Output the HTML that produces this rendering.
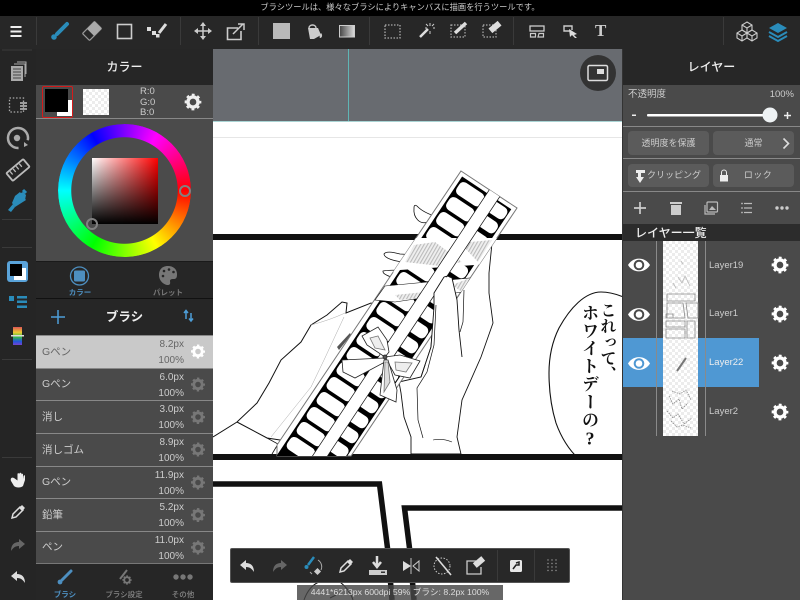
<!DOCTYPE html>
<html><head><meta charset="utf-8">
<style>
*{box-sizing:border-box;margin:0;padding:0}
html,body{width:800px;height:600px;overflow:hidden;background:#272727;font-family:"Liberation Sans","Noto Sans CJK JP",sans-serif}
.a{position:absolute}
.t{position:absolute;white-space:nowrap;line-height:1}
.chk{background-color:#fff;background-image:conic-gradient(#ececec 25%,#fff 0 50%,#ececec 0 75%,#fff 0);background-size:6px 6px}
.btn{position:absolute;background:#5b5b5b;border-radius:4px;color:#ccc;font-size:9px;line-height:24px;text-align:center}
.item{position:absolute;left:36px;width:177px;height:32.67px;background:#4a4a4a;border-top:1px solid #888;color:#ccc;font-size:10px}
.item .n{position:absolute;left:6px;top:10.500px;font-size:10.500px;line-height:1.1}
.item .s{position:absolute;right:29px;top:4px;line-height:1}
.item .p{position:absolute;right:29px;top:20px;line-height:1}
.sel{background:#c9c9c9;color:#666}
</style></head>
<body>
<!-- canvas -->
<div class="a" style="left:213px;top:49px;width:409px;height:72px;background:#686b70"></div>
<div class="a" style="left:213px;top:121px;width:409px;height:479px;background:#fff"></div>

<svg class="a" style="left:0;top:0" width="800" height="600" viewBox="0 0 800 600">
<defs>
<clipPath id="box"><path d="M461 171L517 208L351 456L277 456L277 445Z"/></clipPath>
<clipPath id="cv"><rect x="213" y="121" width="409" height="479"/></clipPath>
<pattern id="hatch" width="3" height="3" patternUnits="userSpaceOnUse" patternTransform="rotate(30)"><rect width="3" height="3" fill="#efefef"/><rect width="1.100" height="3" fill="#bbb"/></pattern>
</defs>
<g clip-path="url(#cv)">
<rect x="213" y="137" width="409" height="1" fill="#e6e6e6"/>
<rect x="213" y="121" width="409" height="1" fill="#a9d4d4"/>
<rect x="213" y="234" width="409" height="6" fill="#111"/>
<rect x="213" y="454" width="409" height="6" fill="#111"/>
<!-- lower frames -->
<path d="M213 484H379.500L388 552L392 600" fill="none" stroke="#111" stroke-width="5.500"/>
<path d="M622 508H404.500L410 552L414 600" fill="none" stroke="#111" stroke-width="5.500"/>
<path d="M304 600Q309 586 319 582M340 582Q350 590 353 600M330 598l6-3" fill="none" stroke="#111" stroke-width="1"/>

<!-- fingertips behind box -->
<g fill="#fff" stroke="#111" stroke-width=".8">
<path d="M428 222C420 225 413 218 414 208C414 204 416 205 418 207C422 211 428 214 437 217Z"/>
<path d="M407 262C395 262 384 258 384 254C386 251 392 252 400 254L416 255Z"/>
<path d="M398 279C390 277 382 274 383 271C388 270 396 270 408 270Z"/>
<!-- left hand -->
<path d="M213 437L237 422L257 403L269 383L281 360L301 342L311 325L327 315L342 302L347 303L346 313L371 303L390 310L330 420L280 440L267 438L237 422" stroke-width="1"/>
<path d="M267 438L278 444L272 454" fill="none"/>
<path d="M311 325Q330 320 345 313M344 317L324 360L311 387L271 437" fill="none" stroke="#aaa" stroke-width=".5"/>
<path d="M337 347L350 333L351 335L339 350Z" fill="#555" stroke="none"/>
<!-- right hand body (behind box) -->
<path d="M411 454L411 437L404 417L401 393L399 382L421 377L431 347L434 307L434 293L444 277L452 278L457 298L492 243L489 273L489 293L493 323L481 357L462 400L457 437L461 454Z" stroke-width=".9"/>
</g>

<!-- box -->
<path d="M461 171L517 208L351 456L277 456L277 445Z" fill="#fff" stroke="#777" stroke-width="1"/>
<g clip-path="url(#box)">
<g transform="translate(461 171) rotate(33.6)">
<rect x="4" y="4" width="59" height="345" fill="#000"/>
<g fill="#fff">
<rect x="6" y="7" width="29" height="14.500" rx="5"/><rect x="6" y="25" width="29" height="14.500" rx="5"/><rect x="6" y="43" width="29" height="14.500" rx="5"/><rect x="6" y="61" width="29" height="14.500" rx="5"/><rect x="6" y="79" width="29" height="14.500" rx="5"/><rect x="6" y="97" width="29" height="14.500" rx="5"/><rect x="6" y="115" width="29" height="14.500" rx="5"/><rect x="6" y="133" width="29" height="14.500" rx="5"/><rect x="6" y="151" width="29" height="14.500" rx="5"/><rect x="6" y="169" width="29" height="14.500" rx="5"/><rect x="6" y="187" width="29" height="14.500" rx="5"/><rect x="6" y="205" width="29" height="14.500" rx="5"/><rect x="6" y="223" width="29" height="14.500" rx="5"/><rect x="6" y="241" width="29" height="14.500" rx="5"/><rect x="6" y="259" width="29" height="14.500" rx="5"/><rect x="6" y="277" width="29" height="14.500" rx="5"/><rect x="6" y="295" width="29" height="14.500" rx="5"/><rect x="6" y="313" width="29" height="14.500" rx="5"/>
<rect x="42" y="6" width="20" height="13" rx="5"/><rect x="42" y="23" width="20" height="13" rx="5"/><rect x="42" y="41" width="20" height="13" rx="5"/><rect x="42" y="59" width="20" height="13" rx="5"/><rect x="42" y="77" width="20" height="13" rx="5"/><rect x="42" y="95" width="20" height="13" rx="5"/><rect x="42" y="113" width="20" height="13" rx="5"/><rect x="42" y="131" width="20" height="13" rx="5"/><rect x="42" y="149" width="20" height="13" rx="5"/><rect x="42" y="167" width="20" height="13" rx="5"/><rect x="42" y="185" width="20" height="13" rx="5"/><rect x="42" y="203" width="20" height="13" rx="5"/><rect x="42" y="221" width="20" height="13" rx="5"/><rect x="42" y="239" width="20" height="13" rx="5"/><rect x="42" y="257" width="20" height="13" rx="5"/><rect x="42" y="275" width="20" height="13" rx="5"/><rect x="42" y="293" width="20" height="13" rx="5"/><rect x="42" y="311" width="20" height="13" rx="5"/>
</g>
</g>
<!-- wrapped band -->
<path d="M400 238H500V262L475 265L400 270L385 275Z" fill="#fff"/>
<path d="M414 245L435 242L462 262L440 266L405 262ZM470 242L492 240L478 262L462 245Z" fill="url(#hatch)"/>
<path d="M385 286L470 278L462 292L395 302L375 300Z" fill="#fff" stroke="#111" stroke-width=".6"/>
<path d="M395 295L425 292L420 298L400 300Z" fill="url(#hatch)"/>
<path d="M452 285L470 278L462 292Z" fill="url(#hatch)"/>
<g transform="translate(461 171) rotate(33.6)">
<rect x="34" y="-2" width="12.500" height="350" fill="#fff" stroke="#111" stroke-width=".7"/>
</g>
</g>

<!-- thumb in front of box -->
<path d="M444 277L434 293L434 307L431 347L425 365L440 365L459 330L457 300L452 278Z" fill="#fff"/>
<g stroke="#111" fill="none" stroke-width=".9">
<path d="M444 277L434 293L434 307L431 347L421 377M444 277Q449 275 452 278L457 300L459 330L462 357"/>
<path d="M464 290L463 322L460 332M436 305L434 345L427 372L417 388L418 420L423 438" stroke-width=".7"/>
<path d="M433 440Q442 438 452 442" stroke-width=".6"/>
</g>
<!-- bow -->
<g fill="#fff" stroke="#222" stroke-width=".8">
<path d="M385 357L367 345L362 336L378 327L387 340L389 352Z"/>
<path d="M370 338L378 336L385 350L375 348Z" fill="#eee" stroke="#777"/>
<path d="M385 358L342 360L343 372L355 378L385 362Z"/>
<path d="M385 357L400 355L420 361L410 378L395 375Z"/>
<path d="M395 362L412 363L406 372L396 370Z" fill="#eee" stroke="#777"/>
<path d="M384 360L380 395L396 402L397 390L388 360Z"/>
<path d="M385 362L384 392L390 382L388 362Z" fill="#ddd" stroke="#777"/>
<circle cx="385" cy="357" r="2" fill="#555"/>
</g>
<!-- balloon -->
<path d="M630 300C618 294 608 292 601 292C585 292 570 308 559 328C552 342 549 358 549 373C549 395 552 410 556 423C561 437 569 450 578 458H630Z" fill="#fff" stroke="#111" stroke-width="1.100"/>
<rect x="560" y="454" width="62" height="6" fill="#111"/>
</g>
<rect x="348" y="49" width="1" height="72" fill="#5fb5b5"/>
</svg>

<div class="t" style="left:599px;top:302px;writing-mode:vertical-rl;font:700 16px/18px 'Noto Serif CJK SC',serif;color:#111">これって、</div>
<div class="t" style="left:581px;top:304px;writing-mode:vertical-rl;font:700 17px/18px 'Noto Serif CJK SC',serif;color:#111;letter-spacing:.8px">ホワイトデーの<span style="text-orientation:upright;font-family:'Liberation Serif',serif;font-size:18px">?</span></div>

<!-- chrome -->
<div class="a" style="left:0;top:0;width:800px;height:16px;background:#000"></div>
<div class="t" style="left:0;width:800px;top:3.500px;text-align:center;font-size:8.250px;color:#ccc">ブラシツールは、様々なブラシによりキャンバスに描画を行うツールです。</div>
<div class="a" style="left:0;top:16px;width:800px;height:33px;background:#272727"></div>
<div class="a" style="left:0;top:49px;width:36px;height:551px;background:#252525"></div>
<div class="a" style="left:36px;top:49px;width:177px;height:551px;background:#262626"></div>
<div class="a" style="left:622px;top:49px;width:178px;height:551px;background:#4a4a4a;border-left:1px solid #333"></div>
<div class="a" style="left:623px;top:49px;width:177px;height:36px;background:#272727"></div>
<div class="a" style="left:36px;top:85px;width:177px;height:33px;background:#4a4a4a"></div>
<div class="a" style="left:36px;top:118px;width:177px;height:1px;background:#888"></div>
<div class="a" style="left:36px;top:119px;width:177px;height:142px;background:#4b4b4b"></div>
<div class="a" style="left:36px;top:261px;width:177px;height:37px;background:#262626;border-top:1px solid #1a1a1a"></div>
<div class="a" style="left:36px;top:298px;width:177px;height:1px;background:#111"></div>

<div class="t" style="left:36px;width:177px;top:61px;text-align:center;font-size:12px;font-weight:500;color:#eee">カラー</div>
<div class="a" style="left:42px;top:86px;width:31px;height:32px;border:1.500px solid #d51a1a;border-radius:2px;background:#4a4a4a"></div>
<div class="a" style="left:57px;top:100px;width:15px;height:16px;background:#fff"></div>
<div class="a" style="left:45px;top:89px;width:23px;height:23px;background:#000;"></div>
<div class="a chk" style="left:83px;top:89px;width:26px;height:26px"></div>
<div class="t" style="left:140px;top:87px;font-size:9.500px;line-height:10.500px;color:#ccc">R:0<br>G:0<br>B:0</div>

<!-- wheel -->
<div class="a" style="left:58px;top:124px;width:133px;height:133px;border-radius:50%;background:conic-gradient(from 90deg,#f00,#ff0,#0f0,#0ff,#00f,#f0f,#f00);-webkit-mask:radial-gradient(circle,transparent 53px,#000 53.500px);mask:radial-gradient(circle,transparent 53px,#000 53.500px)"></div>
<div class="a" style="left:92px;top:158px;width:66px;height:66px;background:linear-gradient(to bottom,transparent,#000),linear-gradient(to right,#fff,#f00)"></div>
<div class="a" style="left:178.500px;top:184.500px;width:12px;height:12px;border-radius:50%;border:2px solid #808080"></div>
<div class="a" style="left:85.500px;top:217.500px;width:12px;height:12px;border-radius:50%;border:2px solid #808080"></div>

<div class="t" style="left:50px;width:60px;text-align:center;top:289px;font-size:7.500px;font-weight:700;color:#4d8fc0">カラー</div>
<div class="t" style="left:138px;width:60px;text-align:center;top:289px;font-size:7.500px;font-weight:700;color:#777">パレット</div>

<div class="t" style="left:36px;width:177px;top:310.500px;text-align:center;font-size:12.500px;font-weight:700;color:#eee">ブラシ</div>

<div class="item sel" style="top:335px"><span class="n">Gペン</span><span class="s">8.2px</span><span class="p">100%</span></div>
<div class="item" style="top:367.700px"><span class="n">Gペン</span><span class="s">6.0px</span><span class="p">100%</span></div>
<div class="item" style="top:400.300px"><span class="n">消し</span><span class="s">3.0px</span><span class="p">100%</span></div>
<div class="item" style="top:433px"><span class="n">消しゴム</span><span class="s">8.9px</span><span class="p">100%</span></div>
<div class="item" style="top:465.700px"><span class="n">Gペン</span><span class="s">11.9px</span><span class="p">100%</span></div>
<div class="item" style="top:498.300px"><span class="n">鉛筆</span><span class="s">5.2px</span><span class="p">100%</span></div>
<div class="item" style="top:530.700px"><span class="n">ペン</span><span class="s">11.0px</span><span class="p">100%</span></div>
<div class="a" style="left:36px;top:563px;width:177px;height:1px;background:#777"></div>

<div class="t" style="left:35px;width:60px;text-align:center;top:591px;font-size:7.500px;font-weight:700;color:#4d8fc0">ブラシ</div>
<div class="t" style="left:94px;width:60px;text-align:center;top:591px;font-size:7.500px;font-weight:500;color:#888">ブラシ設定</div>
<div class="t" style="left:153px;width:60px;text-align:center;top:591px;font-size:7.500px;font-weight:500;color:#888">その他</div>

<!-- right panel -->
<div class="t" style="left:623px;width:177px;top:61px;text-align:center;font-size:12px;font-weight:500;color:#eee">レイヤー</div>
<div class="t" style="left:628px;top:90px;font-size:9.500px;color:#ccc">不透明度</div>
<div class="t" style="right:6px;top:90px;font-size:9.500px;color:#ccc">100%</div>
<div class="a" style="left:623px;top:126px;width:177px;height:1px;background:#888"></div>
<div class="a" style="left:623px;top:158px;width:177px;height:1px;background:#888"></div>
<div class="a" style="left:623px;top:191px;width:177px;height:1px;background:#888"></div>
<div class="btn" style="left:628px;top:131px;width:81px;height:24px">透明度を保護</div>
<div class="btn" style="left:713px;top:131px;width:81px;height:24px">通常</div>
<div class="btn" style="left:628px;top:164px;width:81px;height:23px;line-height:23px;padding-left:11px">クリッピング</div>
<div class="btn" style="left:713px;top:164px;width:81px;height:23px;line-height:23px;padding-left:9px;letter-spacing:.4px">ロック</div>
<div class="a" style="left:623px;top:224px;width:177px;height:17px;background:#2c2c2c"></div>
<div class="t" style="left:635px;top:226.500px;font-size:12px;font-weight:500;color:#eee">レイヤー一覧</div>

<div class="a" style="left:623px;top:338px;width:136px;height:49px;background:#4f98d3"></div>
<div class="a" style="left:656px;top:241px;width:1px;height:195px;background:#8a8a8a"></div>
<div class="a" style="left:705px;top:241px;width:1px;height:195px;background:#8a8a8a"></div>
<div class="a chk" style="left:663px;top:241px;width:35px;height:195px"></div>
<svg class="a" style="left:663px;top:241px" width="36" height="195" viewBox="0 0 36 195" fill="none" stroke="#8a8a8a" stroke-width=".8">
<path d="M15 36l4 6 3-7 5 10M10 42l3 5M18 20l2 3" stroke="#bbb"/>
<path d="M4 53H32V60H4ZM4 62H20L22 77H4ZM23 62H35V77H25ZM3 73H10V77H3ZM3 80H22V86H3ZM3 88H22V97H3ZM24 80H32V97H24Z"/>
<path d="M14 130L23 117" stroke="#777" stroke-width="2"/>
<path d="M6 155l4 8 6-5 3 10 6-6M4 170l6 7 5-4 6 10 8-6M9 150l8 3 6-4 5 10M8 180l6 6 6-2 8 3" stroke="#888" stroke-dasharray="1.500 1"/>
</svg>
<div class="t" style="left:709px;top:260.500px;font-size:9.500px;color:#ccc">Layer19</div>
<div class="t" style="left:709px;top:309px;font-size:9.500px;color:#ccc">Layer1</div>
<div class="t" style="left:709px;top:358px;font-size:9.500px;font-weight:500;color:#eee">Layer22</div>
<div class="t" style="left:709px;top:407px;font-size:9.500px;color:#ccc">Layer2</div>

<!-- floating toolbar -->
<div class="a" style="left:297px;top:585px;width:206px;height:15px;background:rgba(70,70,70,.82)"></div>
<div class="t" style="left:297px;width:206px;top:588px;text-align:center;font-size:8.700px;color:#ddd">4441*6213px 600dpi 59% ブラシ: 8.2px 100%</div>
<div class="a" style="left:230px;top:548px;width:340px;height:35px;background:#282828;border:1px solid #555;border-radius:2px"></div>
<div class="a" style="left:580px;top:55px;width:36px;height:36px;border-radius:50%;background:#333"></div>
<div class="t" style="left:595px;top:22px;font:700 17px/18px 'Liberation Serif',serif;color:#ccc">T</div>

<!-- icon overlay -->
<svg class="a" style="left:0;top:0" width="800" height="600" viewBox="0 0 800 600" fill="none">
<defs>
<symbol id="gear" viewBox="-10 -10 20 20" overflow="visible"><circle r="5.600" stroke="currentColor" stroke-width="3.800"/><circle r="8" stroke="currentColor" stroke-width="2.600" stroke-dasharray="3.140 3.140" stroke-dashoffset="1.570"/></symbol>
<symbol id="eye" viewBox="-11 -7 22 14" overflow="visible"><path d="M-11 0C-6-8.500 6-8.500 11 0C6 8.500-6 8.500-11 0Z" fill="#fff"/><circle r="4.300" fill="none" stroke="#4a4a4a" stroke-width="2"/></symbol>
<symbol id="undo" viewBox="-8 -7 16 14" overflow="visible"><path d="M-7-1L-1-6V-3C4-3 7 0 7 6C5 3 3 1-1 1V4Z" fill="currentColor"/></symbol>
<symbol id="drop" viewBox="-8 -8 16 16" overflow="visible"><path d="M-6 6L-5 2L2-5L5-2L-2 5Z" stroke="currentColor" stroke-width="1.500"/><path d="M1-4L4-7L7-4L4-1Z" fill="currentColor"/></symbol>
</defs>

<!-- top toolbar separators -->
<g fill="#3a3a3a"><rect x="36" y="17" width="1" height="28"/><rect x="180" y="17" width="1" height="28"/><rect x="258" y="17" width="1" height="28"/><rect x="369" y="17" width="1" height="28"/><rect x="513" y="17" width="1" height="28"/><rect x="723" y="17" width="1" height="28"/></g>
<g fill="#eee"><rect x="10.500" y="26" width="11" height="2"/><rect x="10.500" y="30.500" width="11" height="2"/><rect x="10.500" y="35" width="11" height="2"/></g>
<!-- brush -->
<path d="M67 24L57 34" stroke="#2a8cba" stroke-width="4" stroke-linecap="round"/><circle cx="54" cy="37" r="2.800" fill="#2a8cba"/>
<!-- eraser -->
<g transform="translate(92 31) rotate(-45)"><rect x="-8.500" y="-5" width="17" height="10" rx="1" stroke="#999" stroke-width="1.200"/><rect x="-2" y="-5" width="10.500" height="10" fill="#aaa"/></g>
<rect x="117.500" y="24.500" width="14" height="14" stroke="#ccc" stroke-width="1.600"/>
<!-- ctrl -->
<path d="M159 33L166 24" stroke="#ddd" stroke-width="3"/><g fill="#ddd"><rect x="147" y="27" width="4" height="4"/><rect x="152" y="31" width="4" height="4"/><rect x="156" y="34" width="3.500" height="3.500"/></g>
<!-- move -->
<path d="M203 24V38M196 31H210" stroke="#ccc" stroke-width="1.500"/><path d="M203 22L200 26H206ZM203 40L200 36H206ZM194 31L198 28V34ZM212 31L208 28V34Z" fill="#ccc"/>
<!-- transform -->
<path d="M238 28H227.500V39.500H241V31" stroke="#ccc" stroke-width="1.600"/><path d="M233 34L243 24M238 24H244V30" stroke="#ccc" stroke-width="1.500"/>
<rect x="273" y="23" width="17" height="16" fill="#b9b9b9"/>
<!-- bucket -->
<path d="M308 28L318 28L321 35L314 39H310Z" fill="#ccc"/><path d="M309 28C309 24 316 24 316 28" stroke="#ccc" stroke-width="1.400"/><path d="M321 33C323 35 322 38 320 38C319 37 320 35 321 33Z" fill="#ccc"/>
<defs><linearGradient id="g2"><stop offset="0" stop-color="#444"/><stop offset="1" stop-color="#ddd"/></linearGradient></defs>
<rect x="339.500" y="25.500" width="15" height="11.500" fill="url(#g2)" stroke="#ccc"/>
<!-- selection -->
<rect x="385" y="25" width="15" height="13" stroke="#aaa" stroke-width="1.300" stroke-dasharray="1.500 1.500"/>
<!-- wand -->
<path d="M420 37L428 29" stroke="#ddd" stroke-width="2.500"/><path d="M430 23V26M430 31V34M425 28H427M433 28H435M426 24L428 26M434 24L432 26" stroke="#ccc" stroke-width="1"/>
<!-- sel pen -->
<rect x="451" y="25" width="14" height="12" stroke="#aaa" stroke-width="1.200" stroke-dasharray="1.500 1.500"/><path d="M455 33L466 23" stroke="#ddd" stroke-width="3.500"/>
<!-- sel eraser -->
<rect x="483" y="25" width="13" height="12" stroke="#aaa" stroke-width="1.200" stroke-dasharray="1.500 1.500"/><g transform="translate(495 27) rotate(-40)"><rect x="-6" y="-3" width="12" height="6" fill="#ddd"/></g>
<!-- panel -->
<rect x="530" y="26" width="14" height="5" stroke="#ccc" stroke-width="1.300"/><path d="M530.500 33.500H535.500V37H530.500ZM538 37L539 33.500H543.500V37Z" stroke="#ccc" stroke-width="1.200"/>
<!-- op -->
<path d="M570 31H564V26H572V30" stroke="#ccc" stroke-width="1.400"/><path d="M569 29L577 34L574 35L577 38L575 38L572 35L570 37Z" fill="#ddd"/>
<!-- cubes -->
<g stroke="#ccc" stroke-width="1.100"><path d="M747 22L752 25V30L747 33L742 30V25ZM742 25L747 28L752 25M747 28V33"/><path d="M742 30L747 33V38L742 41L737 38V33ZM737 33L742 36L747 33M742 36V41"/><path d="M752 30L757 33V38L752 41L747 38V33ZM747 33L752 36L757 33M752 36V41"/></g>
<!-- layers blue -->
<path d="M778 23L787 28L778 33L769 28Z" fill="#2a8cba"/><path d="M769 32L778 37L787 32M769 36L778 41L787 36" stroke="#2a8cba" stroke-width="2"/>

<!-- minimap icon -->
<rect x="588" y="65.500" width="19.500" height="15" rx="1.500" stroke="#ddd" stroke-width="1.500"/><rect x="597" y="69" width="7" height="5" fill="#ddd"/>

<!-- left sidebar -->
<g fill="#3a3a3a"><rect x="2" y="49.500" width="30" height="1"/><rect x="2" y="219" width="30" height="1"/><rect x="2" y="247" width="30" height="1"/><rect x="2" y="359" width="30" height="1"/><rect x="2" y="457" width="30" height="1"/></g>
<path d="M14 64H25V77M17 62H26V74" stroke="#aaa" stroke-width="1"/><rect x="11" y="66" width="12" height="15" fill="#aaa"/><path d="M13 69H21M13 72H21M13 75H21M13 78H21" stroke="#444" stroke-width="1"/>
<rect x="9.500" y="98" width="14" height="14" stroke="#aaa" stroke-width="1.300" stroke-dasharray="1.500 1.800"/><path d="M20 103H27M20 106H27M20 109H27" stroke="#aaa" stroke-width="1.800"/>
<path d="M26 144A10 10 0 1 1 26 132" stroke="#aaa" stroke-width="2.500" transform="rotate(50 18 138)"/><circle cx="17" cy="138" r="3.200" fill="#aaa"/><path d="M24 142L28 145L24 147Z" fill="#aaa"/>
<g transform="translate(18 170) rotate(-40)"><rect x="-11" y="-5" width="22" height="10" rx="1" stroke="#bbb" stroke-width="1.800"/><path d="M-7-4V0M-3-4V0M1-4V0M5-4V0" stroke="#bbb" stroke-width="1.300"/></g>
<g fill="#2a8cba"><path d="M15 196L20 192L26 200L15 207L12 203Z"/><path d="M23 190L26 193" stroke="#2a8cba" stroke-width="3"/><path d="M8 210L13 204L15 207L11 212Z"/><path d="M15 196L19 194L23 192L26 195L25 200Z"/></g>
<!-- color box -->
<rect x="7" y="261" width="21" height="21" rx="3" fill="#5aa3d9"/><rect x="14" y="268" width="12" height="12" fill="#fff"/><rect x="10" y="264" width="12" height="12" fill="#000"/>
<!-- list -->
<rect x="9" y="296" width="5" height="5" fill="#2a8cba"/><rect x="17" y="296" width="10" height="2.500" fill="#2a8cba"/><rect x="17" y="300.500" width="10" height="2.500" fill="#2a8cba"/><rect x="17" y="305.500" width="10" height="2.500" fill="#2a8cba"/>
<defs><linearGradient id="rb" x1="0" y1="0" x2="0" y2="1"><stop offset="0" stop-color="#d55"/><stop offset=".3" stop-color="#ec3"/><stop offset=".55" stop-color="#3b4"/><stop offset=".8" stop-color="#25d"/><stop offset="1" stop-color="#74c"/></linearGradient></defs>
<rect x="13" y="327" width="9" height="18" fill="url(#rb)"/><rect x="11" y="335" width="13" height="1.500" fill="#ddd"/>
<!-- hand -->
<path d="M11 481L14 486C16 488 21 488 23 486L25 480V476C25 475 24 475 23.500 476L23 479V474.500C23 473.500 22 473.500 21.500 474.500V479V473.500C21 472.500 19.500 472.500 19.500 473.500V479V474C19 473 17.500 473 17.500 474V480.500L14 478C12 477 10 478 11 481Z" fill="#eee"/>
<use href="#drop" x="10" y="504" width="16" height="16" color="#ddd"/>
<g transform="translate(18 545) scale(-1 1)"><use href="#undo" x="-8" y="-7" width="16" height="14" color="#666"/></g>
<use href="#undo" x="10" y="570" width="16" height="14" color="#ddd"/>

<!-- gears -->
<use href="#gear" x="184" y="93" width="18" height="18" color="#eee"/>
<use href="#gear" x="190.500" y="344" width="15" height="15" color="#fff"/>
<use href="#gear" x="190.500" y="377" width="15" height="15" color="#777"/>
<use href="#gear" x="190.500" y="409.500" width="15" height="15" color="#777"/>
<use href="#gear" x="190.500" y="442" width="15" height="15" color="#777"/>
<use href="#gear" x="190.500" y="475" width="15" height="15" color="#777"/>
<use href="#gear" x="190.500" y="507.500" width="15" height="15" color="#777"/>
<use href="#gear" x="190.500" y="540" width="15" height="15" color="#777"/>
<use href="#gear" x="771" y="256" width="18" height="18" color="#fff"/>
<use href="#gear" x="771" y="305" width="18" height="18" color="#fff"/>
<use href="#gear" x="771" y="354" width="18" height="18" color="#fff"/>
<use href="#gear" x="771" y="403" width="18" height="18" color="#fff"/>

<!-- tabs: color/palette -->
<circle cx="79.500" cy="276" r="9" stroke="#4d8fc0" stroke-width="1.300"/><rect x="74" y="270.500" width="11" height="11" rx="1.500" fill="#4d8fc0"/>
<path d="M168 266C161 266 159 271 159 275C159 281 164 285 168 285C171 285 170 282 170 281C170 279 172 279 174 279C177 279 177 276 177 274C177 269 173 266 168 266Z" fill="#777"/><g fill="#262626"><circle cx="164" cy="271" r="1.300"/><circle cx="169" cy="269.500" r="1.300"/><circle cx="173.500" cy="272" r="1.300"/><circle cx="163" cy="276" r="1.300"/></g>

<!-- brush header -->
<path d="M58 310V324M51 317H65" stroke="#4d9ed8" stroke-width="1.500"/>
<path d="M186 311V319M184 313L186 310.500L188 313M191 321V313M189 318.500L191 321L193 318.500" stroke="#4d9ed8" stroke-width="1.500"/>
<!-- bottom tabs -->
<path d="M71 571L62 580" stroke="#4d8fc0" stroke-width="3" stroke-linecap="round"/><circle cx="60" cy="582" r="2.400" fill="#4d8fc0"/>
<path d="M127 570L120 579" stroke="#777" stroke-width="2"/><use href="#gear" x="122" y="575" width="10" height="10" color="#777"/>
<g fill="#777"><circle cx="176" cy="577" r="2.700"/><circle cx="183" cy="577" r="2.700"/><circle cx="190" cy="577" r="2.700"/></g>

<!-- opacity slider -->
<rect x="647" y="114" width="123" height="2.500" rx="1" fill="#fff"/><circle cx="770" cy="115" r="7.500" fill="#eef2f4"/>
<rect x="632" y="114.500" width="4" height="1.500" fill="#eee"/><path d="M784 115.500H791M787.500 112V119" stroke="#eee" stroke-width="1.500"/>
<!-- chevrons -->
<path d="M783.500 138.500L788.500 143.500L783.500 148.500" stroke="#ddd" stroke-width="1.600"/>
<path d="M636 170H645V173H641V177H644L640 183L636 177H638V173H636Z" fill="#eee"/>
<rect x="720" y="175" width="8" height="6.500" fill="#eee"/><path d="M721.500 175V172.500A2.500 2.500 0 0 1 726.500 172.500V175" stroke="#eee" stroke-width="1"/>
<!-- layer actions -->
<path d="M640 202V214M634 208H646" stroke="#ccc" stroke-width="1.700"/>
<path d="M671 205H681V215H671Z" fill="#ccc"/><path d="M670 203H682" stroke="#ccc" stroke-width="2"/>
<rect x="707" y="202" width="10.500" height="10" rx="1" stroke="#bbb" stroke-width="1.200"/><path d="M705 205V214H715" stroke="#bbb" stroke-width="1.200"/><path d="M709 210L712 206L716 210Z" fill="#bbb"/>
<path d="M744 203.500H752M744 208H752M744 212.500H752" stroke="#bbb" stroke-width="1.200"/><circle cx="742" cy="203.500" r=".9" fill="#bbb"/><circle cx="742" cy="208" r=".9" fill="#bbb"/><circle cx="742" cy="212.500" r=".9" fill="#bbb"/>
<g fill="#ccc"><circle cx="777" cy="208" r="1.700"/><circle cx="782" cy="208" r="1.700"/><circle cx="787" cy="208" r="1.700"/></g>

<!-- eyes -->
<use href="#eye" x="628" y="258" width="22" height="14"/>
<use href="#eye" x="628" y="307.500" width="22" height="14"/>
<g><path d="M628 363.500C633 355 645 355 650 363.500C645 372 633 372 628 363.500Z" fill="#fff"/><circle cx="639" cy="363.500" r="4.300" stroke="#4f98d3" stroke-width="2"/></g>

<!-- bottom toolbar -->
<use href="#undo" x="239" y="559" width="16" height="14" color="#ddd"/>
<g transform="translate(280 566) scale(-1 1)"><use href="#undo" x="-8" y="-7" width="16" height="14" color="#666"/></g>
<path d="M314 557L308 565" stroke="#2a8cba" stroke-width="2.500"/><circle cx="306.500" cy="567" r="2" fill="#2a8cba"/>
<path d="M318 560A8 8 0 0 1 321 570M312 574L310 572" stroke="#aaa" stroke-width="1"/><rect x="315" y="569" width="5" height="5" fill="#ccc" transform="rotate(45 317.500 571.500)"/>
<use href="#drop" x="338" y="558" width="16" height="16" color="#ddd"/>
<path d="M377 556V566M373 562L377 567L381 562" stroke="#ddd" stroke-width="2.500"/><rect x="369" y="570" width="18" height="5" fill="#ccc"/><rect x="381" y="571.500" width="4" height="1.500" fill="#333"/>
<path d="M403 561V571L411 566Z" fill="#ddd"/><path d="M411 558V574" stroke="#bbb" stroke-width="1"/><path d="M419 561V571L413 566Z" stroke="#ccc" stroke-width="1"/>
<circle cx="442" cy="566" r="8" stroke="#ccc" stroke-width="1" stroke-dasharray="1.500 1.500"/><path d="M436 557L451 575" stroke="#ddd" stroke-width="1.600"/>
<path d="M476 561H467V574H481V567" stroke="#ccc" stroke-width="1.300"/><g transform="translate(479 562) rotate(-40)"><rect x="-5.500" y="-3" width="11" height="6" fill="#ddd"/></g>
<rect x="497" y="550" width="1" height="31" fill="#3a3a3a"/><rect x="534" y="550" width="1" height="31" fill="#3a3a3a"/>
<rect x="510" y="560" width="12" height="12" rx="1.500" fill="#e8e8e8"/><path d="M513 569L516 565H519L519 562L516 563" stroke="#222" stroke-width="1.500"/>
<g fill="#999"><circle cx="548" cy="560" r=".7"/><circle cx="552" cy="560" r=".7"/><circle cx="556" cy="560" r=".7"/><circle cx="548" cy="563.500" r=".7"/><circle cx="552" cy="563.500" r=".7"/><circle cx="556" cy="563.500" r=".7"/><circle cx="548" cy="567" r=".7"/><circle cx="552" cy="567" r=".7"/><circle cx="556" cy="567" r=".7"/><circle cx="548" cy="570.500" r=".7"/><circle cx="552" cy="570.500" r=".7"/><circle cx="556" cy="570.500" r=".7"/></g>
</svg>
</body></html>
